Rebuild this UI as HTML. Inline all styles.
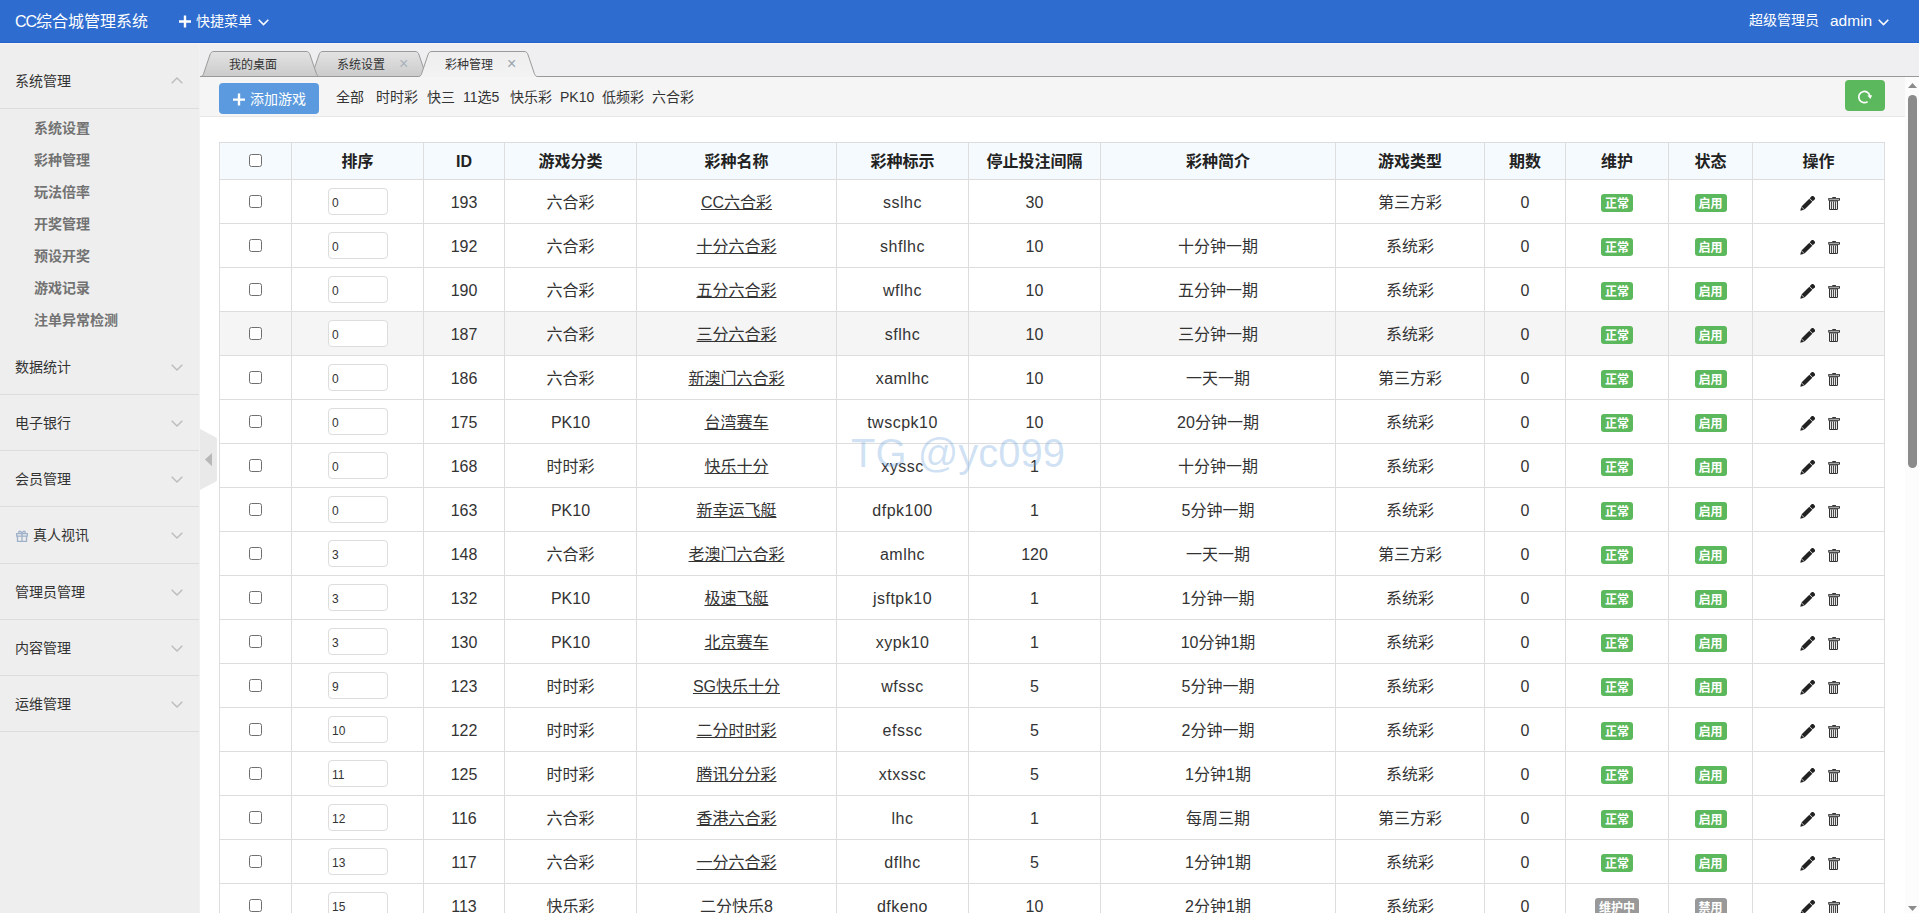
<!DOCTYPE html>
<html lang="zh-CN">
<head>
<meta charset="utf-8">
<title>CC综合城管理系统</title>
<style>
*{box-sizing:border-box;}
html,body{margin:0;padding:0;}
body{width:1919px;height:913px;overflow:hidden;position:relative;background:#fff;
  font-family:"Liberation Sans","Noto Sans CJK SC",sans-serif;color:#333;font-size:14px;}
a{color:inherit;}
/* header */
#hd{position:absolute;left:0;top:0;width:1919px;height:43px;background:#2e6ccf;color:#fff;border-bottom:1px solid #2262cc;}
#hl{position:absolute;left:0;top:43px;width:1919px;height:1px;background:#f9f6f3;z-index:5;}
#hd .t{position:absolute;white-space:nowrap;line-height:20px;}
#logo{left:15px;top:12px;font-size:16px;}
#quick{left:196px;top:11px;font-size:14px;}
#role{left:1749px;top:10px;font-size:14px;}
#adm{left:1830px;top:11px;font-size:15.5px;}
#hd svg{position:absolute;}
/* sidebar */
#sb{position:absolute;left:0;top:43px;width:200px;height:870px;background:#eee;border-right:1px solid #f1f1f1;}
#sb .m{position:absolute;left:0;width:199px;height:56px;border-bottom:1px solid #dcdcdc;}
#sb .m span{position:absolute;left:15px;top:18px;line-height:20px;font-size:14px;color:#333;white-space:nowrap;}
#sb .m svg{position:absolute;left:171px;top:24.5px;}
#sb .s{position:absolute;left:34px;line-height:20px;font-size:14px;color:#727272;font-weight:700;white-space:nowrap;}
/* handle */
#hdl{position:absolute;left:200px;top:429px;}
/* tabs */
#tabs{position:absolute;left:200px;top:43px;width:1719px;height:34px;background:#efeef0;}
#tabs svg{position:absolute;left:0;top:0;}
#tabs .tt{position:absolute;top:15px;line-height:14px;font-size:12px;color:#333;white-space:nowrap;}
#tabs .x{position:absolute;top:14px;line-height:14px;font-size:16px;color:#a9b3bd;}
/* content */
#ct{position:absolute;left:200px;top:77px;width:1705px;height:836px;background:#fff;overflow:hidden;}
#tb{position:absolute;left:0;top:0;width:1705px;height:40px;background:#f5f5f5;border-bottom:1px solid #e7e7e7;}
#add{position:absolute;left:19px;top:6px;width:100px;height:31px;border-radius:4px;background:#5b9ade;color:#fff;font-size:14px;}
#add span{position:absolute;left:31px;top:6px;line-height:20px;white-space:nowrap;}
#add svg{position:absolute;left:14px;top:10px;}
#tb .f{position:absolute;top:10px;line-height:20px;font-size:14px;color:#333;white-space:nowrap;}
#rf{position:absolute;left:1645px;top:3px;width:40px;height:31px;border-radius:4px;background:#5cb85c;}
#rf svg{position:absolute;left:12px;top:9px;}
/* table */
table{position:absolute;left:19px;top:65px;width:1665px;border-collapse:collapse;table-layout:fixed;}
th,td{border:1px solid #ddd;text-align:center;padding:0;font-size:16px;white-space:nowrap;overflow:hidden;}
th{height:37px;background:#f5fafe;font-weight:bold;color:#222;line-height:34px;padding-top:2px;}
td{height:44px;line-height:41px;color:#333;padding-top:2px;}
tr.hov td{background:#f5f5f5;}
td a{text-decoration:underline;}
td:nth-child(6){letter-spacing:.5px;}
.cb{display:inline-block;width:13px;height:13px;border:1px solid #6f6f6f;border-radius:2.5px;background:#fff;vertical-align:top;margin-top:13px;}
th .cb{margin-top:9px;}
.inp{display:inline-block;width:60px;height:27px;border:1px solid #ddd;border-radius:4px;background:#fff;vertical-align:top;margin-top:6px;
  text-align:left;padding-left:3px;font-size:12px;line-height:29px;color:#333;margin-left:1px;}
.lb{display:inline-block;width:32px;height:18px;border-radius:3px;color:#fff;font-size:12px;font-weight:bold;line-height:20px;vertical-align:top;margin-top:12px;text-align:center;}
.lb.ok{background:#5cb85c;}
.lb.off{background:#999;}
.lb.w3{width:44px;}
.ops{display:inline-block;position:relative;width:41px;height:16px;vertical-align:top;margin-top:14px;}
.ic{position:absolute;}
.pen{left:2.4px;top:0;}
.tr{left:29px;top:1px;}
/* scrollbar */
#sc{position:absolute;left:1905px;top:77px;width:14px;height:836px;background:#fcfcfc;}
#sc i{position:absolute;left:3px;top:18px;width:9px;height:373px;border-radius:5px;background:#8b8b8b;}
#sc svg{position:absolute;left:3px;}
/* watermark */
#wm{position:absolute;left:851px;top:430px;font-family:"Liberation Sans",sans-serif;font-size:40px;line-height:46px;color:rgba(105,160,220,0.31);white-space:nowrap;pointer-events:none;}
</style>
</head>
<body>

<div id="hd">
  <div class="t" id="logo"><span style="letter-spacing:-1px">CC</span>综合城管理系统</div>
  <svg style="left:179px;top:15px" width="12" height="13" viewBox="0 0 12 13"><path d="M4.8 0.5h2.4v4.8h4.8v2.4H7.2v4.8H4.8V7.7H0V5.3h4.8z" fill="#fff"/></svg>
  <div class="t" id="quick">快捷菜单</div>
  <svg style="left:258px;top:19px" width="11" height="7" viewBox="0 0 11 7"><path d="M0.7 0.8 L5.5 5.6 L10.3 0.8" fill="none" stroke="#fff" stroke-width="1.5"/></svg>
  <div class="t" id="role">超级管理员</div>
  <div class="t" id="adm">admin</div>
  <svg style="left:1878px;top:19px" width="11" height="7" viewBox="0 0 11 7"><path d="M0.7 0.8 L5.5 5.6 L10.3 0.8" fill="none" stroke="#fff" stroke-width="1.5"/></svg>
</div>

<div id="hl"></div>

<div id="sb">
  <div class="m" style="top:10px"><span>系统管理</span><svg style="top:23.5px" width="12" height="7" viewBox="0 0 12 7"><path d="M0.7 6.3 L6 1 L11.3 6.3" fill="none" stroke="#bcbcbc" stroke-width="1.4"/></svg></div>
  <div class="s" style="top:75px">系统设置</div>
  <div class="s" style="top:107px">彩种管理</div>
  <div class="s" style="top:139px">玩法倍率</div>
  <div class="s" style="top:171px">开奖管理</div>
  <div class="s" style="top:203px">预设开奖</div>
  <div class="s" style="top:235px">游戏记录</div>
  <div class="s" style="top:267px">注单异常检测</div>
  <div class="m" style="top:296px"><span>数据统计</span><svg width="12" height="7" viewBox="0 0 12 7"><path d="M0.7 0.7 L6 6 L11.3 0.7" fill="none" stroke="#bcbcbc" stroke-width="1.4"/></svg></div>
  <div class="m" style="top:352px"><span>电子银行</span><svg width="12" height="7" viewBox="0 0 12 7"><path d="M0.7 0.7 L6 6 L11.3 0.7" fill="none" stroke="#bcbcbc" stroke-width="1.4"/></svg></div>
  <div class="m" style="top:408px"><span>会员管理</span><svg width="12" height="7" viewBox="0 0 12 7"><path d="M0.7 0.7 L6 6 L11.3 0.7" fill="none" stroke="#bcbcbc" stroke-width="1.4"/></svg></div>
  <div class="m" style="top:464px;height:57px"><span style="left:33px">真人视讯</span>
    <svg style="left:16px;top:23px" width="12" height="12" viewBox="0 0 12 12"><path d="M0.7 3.7h10.6v2.4H0.7zM1.5 6.1h9V11.3H1.5zM6 3.7V11.3M3.4 3.5c-1.6-1.4.2-3.2 1.5-1.8L6 3.5 7.1 1.7c1.3-1.4 3.1.4 1.5 1.8" fill="none" stroke="#9fb0c9" stroke-width="1.3"/></svg>
    <svg width="12" height="7" viewBox="0 0 12 7"><path d="M0.7 0.7 L6 6 L11.3 0.7" fill="none" stroke="#bcbcbc" stroke-width="1.4"/></svg></div>
  <div class="m" style="top:521px"><span>管理员管理</span><svg width="12" height="7" viewBox="0 0 12 7"><path d="M0.7 0.7 L6 6 L11.3 0.7" fill="none" stroke="#bcbcbc" stroke-width="1.4"/></svg></div>
  <div class="m" style="top:577px"><span>内容管理</span><svg width="12" height="7" viewBox="0 0 12 7"><path d="M0.7 0.7 L6 6 L11.3 0.7" fill="none" stroke="#bcbcbc" stroke-width="1.4"/></svg></div>
  <div class="m" style="top:633px"><span>运维管理</span><svg width="12" height="7" viewBox="0 0 12 7"><path d="M0.7 0.7 L6 6 L11.3 0.7" fill="none" stroke="#bcbcbc" stroke-width="1.4"/></svg></div>
</div>

<div id="tabs">
  <svg width="1719" height="34" viewBox="0 0 1719 34">
    <defs>
      <linearGradient id="tg" x1="0" y1="0" x2="0" y2="1"><stop offset="0" stop-color="#e3e3e3"/><stop offset="1" stop-color="#cbcbcb"/></linearGradient>
      <linearGradient id="ta" x1="0" y1="0" x2="0" y2="1"><stop offset="0" stop-color="#eeeeee"/><stop offset="1" stop-color="#f3f3f3"/></linearGradient>
    </defs>
    <path d="M109.5 33.5 C111.2 33.5 112 32.4 112.7 30.4 L118.9 12 C119.7 9.6 120.6 8.5 123 8.5 L215 8.5 C217.4 8.5 218.3 9.6 219.1 12 L225.3 30.4 C226 32.4 226.8 33.5 228.5 33.5 Z" fill="url(#tg)" stroke="#9a9a9a" stroke-width="1"/>
    <path d="M0.5 33.5 C2.2 33.5 3 32.4 3.7 30.4 L9.9 12 C10.7 9.6 11.6 8.5 14 8.5 L106 8.5 C108.4 8.5 109.3 9.6 110.1 12 L116.3 30.4 C117 32.4 117.8 33.5 119.5 33.5 Z" fill="url(#tg)" stroke="#9a9a9a" stroke-width="1"/>
    <path d="M0 33.5 H1719" stroke="#999" stroke-width="1" fill="none"/>
    <path d="M218.5 33.5 C220.2 33.5 221 32.4 221.7 30.4 L227.9 12 C228.7 9.6 229.6 8.5 232 8.5 L324 8.5 C326.4 8.5 327.3 9.6 328.1 12 L334.3 30.4 C335 32.4 335.8 33.5 337.5 33.5 L337.5 34.5 L218.5 34.5 Z" fill="url(#ta)" stroke="none"/>
    <path d="M218.5 33.5 C220.2 33.5 221 32.4 221.7 30.4 L227.9 12 C228.7 9.6 229.6 8.5 232 8.5 L324 8.5 C326.4 8.5 327.3 9.6 328.1 12 L334.3 30.4 C335 32.4 335.8 33.5 337.5 33.5" fill="none" stroke="#9a9a9a" stroke-width="1"/>
  </svg>
  <div class="tt" style="left:29px">我的桌面</div>
  <div class="tt" style="left:137px">系统设置</div>
  <div class="x" style="left:199px">×</div>
  <div class="tt" style="left:245px">彩种管理</div>
  <div class="x" style="left:307px;color:#9aa4ae">×</div>
</div>

<div id="ct">
  <div id="tb">
    <div id="add"><svg width="12" height="13" viewBox="0 0 12 13"><path d="M4.8 0.6h2.4v4.8h4.8v2.4H7.2v4.8H4.8V7.8H0V5.4h4.8z" fill="#fff"/></svg><span>添加游戏</span></div>
    <div class="f" style="left:136px">全部</div>
    <div class="f" style="left:176px">时时彩</div>
    <div class="f" style="left:227px">快三</div>
    <div class="f" style="left:263px">11选5</div>
    <div class="f" style="left:310px">快乐彩</div>
    <div class="f" style="left:360px">PK10</div>
    <div class="f" style="left:402px">低频彩</div>
    <div class="f" style="left:452px">六合彩</div>
    <div id="rf"><svg width="16" height="16" viewBox="0 0 16 16"><path d="M12.9 7.2 A5.6 5.6 0 1 0 10.6 12.6" fill="none" stroke="#fff" stroke-width="1.6"/><path d="M10.4 6.4 L15.2 6.2 L13.4 9.9 Z" fill="#fff"/></svg></div>
  </div>
  <table>
    <colgroup><col style="width:72px"><col style="width:132px"><col style="width:81px"><col style="width:132px"><col style="width:200px"><col style="width:132px"><col style="width:132px"><col style="width:235px"><col style="width:149px"><col style="width:81px"><col style="width:103px"><col style="width:84px"><col style="width:132px"></colgroup>
    <thead><tr><th><span class="cb"></span></th><th>排序</th><th>ID</th><th>游戏分类</th><th>彩种名称</th><th>彩种标示</th><th>停止投注间隔</th><th>彩种简介</th><th>游戏类型</th><th>期数</th><th>维护</th><th>状态</th><th>操作</th></tr></thead>
    <tbody>
<tr><td><span class="cb"></span></td><td><span class="inp">0</span></td><td>193</td><td>六合彩</td><td><a>CC六合彩</a></td><td>sslhc</td><td>30</td><td></td><td>第三方彩</td><td>0</td><td><span class="lb ok">正常</span></td><td><span class="lb ok">启用</span></td><td class="op"><span class="ops"><svg class="ic pen" viewBox="0 0 15 15" width="15" height="15"><g transform="translate(0.3 14.7) rotate(-45)" fill="#222"><path d="M0 0 L3.3 -2.1 L3.3 2.1 Z"/><path d="M3.8 -2.15 H14.9 V2.15 H3.8 Z"/><path d="M15.4 -2.15 H18.5 Q19.5 -2.15 19.5 -1.15 V1.15 Q19.5 2.15 18.5 2.15 H15.4 Z"/></g></svg><svg class="ic tr" viewBox="0 0 14 13" width="14" height="13"><path d="M5.3 0 h3.6 v1.2 h-3.6z" fill="#333"/><rect x="1.2" y="0.9" width="11.8" height="2.8" rx="0.7" fill="#333"/><rect x="2.2" y="1.8" width="9.8" height="0.9" fill="#d8d8d8"/><path d="M2 3.5 h9 v8.2 q0 1.3 -1.3 1.3 h-6.4 q-1.3 0 -1.3 -1.3z" fill="#333"/><rect x="3" y="4.4" width="7" height="7.6" fill="#e6e6e6"/><path d="M4 4.4h1v7.6h-1zM6 4.4h1v7.6h-1zM8 4.4h1v7.6h-1z" fill="#4a4a4a"/></svg></span></td></tr>
<tr><td><span class="cb"></span></td><td><span class="inp">0</span></td><td>192</td><td>六合彩</td><td><a>十分六合彩</a></td><td>shflhc</td><td>10</td><td>十分钟一期</td><td>系统彩</td><td>0</td><td><span class="lb ok">正常</span></td><td><span class="lb ok">启用</span></td><td class="op"><span class="ops"><svg class="ic pen" viewBox="0 0 15 15" width="15" height="15"><g transform="translate(0.3 14.7) rotate(-45)" fill="#222"><path d="M0 0 L3.3 -2.1 L3.3 2.1 Z"/><path d="M3.8 -2.15 H14.9 V2.15 H3.8 Z"/><path d="M15.4 -2.15 H18.5 Q19.5 -2.15 19.5 -1.15 V1.15 Q19.5 2.15 18.5 2.15 H15.4 Z"/></g></svg><svg class="ic tr" viewBox="0 0 14 13" width="14" height="13"><path d="M5.3 0 h3.6 v1.2 h-3.6z" fill="#333"/><rect x="1.2" y="0.9" width="11.8" height="2.8" rx="0.7" fill="#333"/><rect x="2.2" y="1.8" width="9.8" height="0.9" fill="#d8d8d8"/><path d="M2 3.5 h9 v8.2 q0 1.3 -1.3 1.3 h-6.4 q-1.3 0 -1.3 -1.3z" fill="#333"/><rect x="3" y="4.4" width="7" height="7.6" fill="#e6e6e6"/><path d="M4 4.4h1v7.6h-1zM6 4.4h1v7.6h-1zM8 4.4h1v7.6h-1z" fill="#4a4a4a"/></svg></span></td></tr>
<tr><td><span class="cb"></span></td><td><span class="inp">0</span></td><td>190</td><td>六合彩</td><td><a>五分六合彩</a></td><td>wflhc</td><td>10</td><td>五分钟一期</td><td>系统彩</td><td>0</td><td><span class="lb ok">正常</span></td><td><span class="lb ok">启用</span></td><td class="op"><span class="ops"><svg class="ic pen" viewBox="0 0 15 15" width="15" height="15"><g transform="translate(0.3 14.7) rotate(-45)" fill="#222"><path d="M0 0 L3.3 -2.1 L3.3 2.1 Z"/><path d="M3.8 -2.15 H14.9 V2.15 H3.8 Z"/><path d="M15.4 -2.15 H18.5 Q19.5 -2.15 19.5 -1.15 V1.15 Q19.5 2.15 18.5 2.15 H15.4 Z"/></g></svg><svg class="ic tr" viewBox="0 0 14 13" width="14" height="13"><path d="M5.3 0 h3.6 v1.2 h-3.6z" fill="#333"/><rect x="1.2" y="0.9" width="11.8" height="2.8" rx="0.7" fill="#333"/><rect x="2.2" y="1.8" width="9.8" height="0.9" fill="#d8d8d8"/><path d="M2 3.5 h9 v8.2 q0 1.3 -1.3 1.3 h-6.4 q-1.3 0 -1.3 -1.3z" fill="#333"/><rect x="3" y="4.4" width="7" height="7.6" fill="#e6e6e6"/><path d="M4 4.4h1v7.6h-1zM6 4.4h1v7.6h-1zM8 4.4h1v7.6h-1z" fill="#4a4a4a"/></svg></span></td></tr>
<tr class="hov"><td><span class="cb"></span></td><td><span class="inp">0</span></td><td>187</td><td>六合彩</td><td><a>三分六合彩</a></td><td>sflhc</td><td>10</td><td>三分钟一期</td><td>系统彩</td><td>0</td><td><span class="lb ok">正常</span></td><td><span class="lb ok">启用</span></td><td class="op"><span class="ops"><svg class="ic pen" viewBox="0 0 15 15" width="15" height="15"><g transform="translate(0.3 14.7) rotate(-45)" fill="#222"><path d="M0 0 L3.3 -2.1 L3.3 2.1 Z"/><path d="M3.8 -2.15 H14.9 V2.15 H3.8 Z"/><path d="M15.4 -2.15 H18.5 Q19.5 -2.15 19.5 -1.15 V1.15 Q19.5 2.15 18.5 2.15 H15.4 Z"/></g></svg><svg class="ic tr" viewBox="0 0 14 13" width="14" height="13"><path d="M5.3 0 h3.6 v1.2 h-3.6z" fill="#333"/><rect x="1.2" y="0.9" width="11.8" height="2.8" rx="0.7" fill="#333"/><rect x="2.2" y="1.8" width="9.8" height="0.9" fill="#d8d8d8"/><path d="M2 3.5 h9 v8.2 q0 1.3 -1.3 1.3 h-6.4 q-1.3 0 -1.3 -1.3z" fill="#333"/><rect x="3" y="4.4" width="7" height="7.6" fill="#e6e6e6"/><path d="M4 4.4h1v7.6h-1zM6 4.4h1v7.6h-1zM8 4.4h1v7.6h-1z" fill="#4a4a4a"/></svg></span></td></tr>
<tr><td><span class="cb"></span></td><td><span class="inp">0</span></td><td>186</td><td>六合彩</td><td><a>新澳门六合彩</a></td><td>xamlhc</td><td>10</td><td>一天一期</td><td>第三方彩</td><td>0</td><td><span class="lb ok">正常</span></td><td><span class="lb ok">启用</span></td><td class="op"><span class="ops"><svg class="ic pen" viewBox="0 0 15 15" width="15" height="15"><g transform="translate(0.3 14.7) rotate(-45)" fill="#222"><path d="M0 0 L3.3 -2.1 L3.3 2.1 Z"/><path d="M3.8 -2.15 H14.9 V2.15 H3.8 Z"/><path d="M15.4 -2.15 H18.5 Q19.5 -2.15 19.5 -1.15 V1.15 Q19.5 2.15 18.5 2.15 H15.4 Z"/></g></svg><svg class="ic tr" viewBox="0 0 14 13" width="14" height="13"><path d="M5.3 0 h3.6 v1.2 h-3.6z" fill="#333"/><rect x="1.2" y="0.9" width="11.8" height="2.8" rx="0.7" fill="#333"/><rect x="2.2" y="1.8" width="9.8" height="0.9" fill="#d8d8d8"/><path d="M2 3.5 h9 v8.2 q0 1.3 -1.3 1.3 h-6.4 q-1.3 0 -1.3 -1.3z" fill="#333"/><rect x="3" y="4.4" width="7" height="7.6" fill="#e6e6e6"/><path d="M4 4.4h1v7.6h-1zM6 4.4h1v7.6h-1zM8 4.4h1v7.6h-1z" fill="#4a4a4a"/></svg></span></td></tr>
<tr><td><span class="cb"></span></td><td><span class="inp">0</span></td><td>175</td><td>PK10</td><td><a>台湾赛车</a></td><td>twscpk10</td><td>10</td><td>20分钟一期</td><td>系统彩</td><td>0</td><td><span class="lb ok">正常</span></td><td><span class="lb ok">启用</span></td><td class="op"><span class="ops"><svg class="ic pen" viewBox="0 0 15 15" width="15" height="15"><g transform="translate(0.3 14.7) rotate(-45)" fill="#222"><path d="M0 0 L3.3 -2.1 L3.3 2.1 Z"/><path d="M3.8 -2.15 H14.9 V2.15 H3.8 Z"/><path d="M15.4 -2.15 H18.5 Q19.5 -2.15 19.5 -1.15 V1.15 Q19.5 2.15 18.5 2.15 H15.4 Z"/></g></svg><svg class="ic tr" viewBox="0 0 14 13" width="14" height="13"><path d="M5.3 0 h3.6 v1.2 h-3.6z" fill="#333"/><rect x="1.2" y="0.9" width="11.8" height="2.8" rx="0.7" fill="#333"/><rect x="2.2" y="1.8" width="9.8" height="0.9" fill="#d8d8d8"/><path d="M2 3.5 h9 v8.2 q0 1.3 -1.3 1.3 h-6.4 q-1.3 0 -1.3 -1.3z" fill="#333"/><rect x="3" y="4.4" width="7" height="7.6" fill="#e6e6e6"/><path d="M4 4.4h1v7.6h-1zM6 4.4h1v7.6h-1zM8 4.4h1v7.6h-1z" fill="#4a4a4a"/></svg></span></td></tr>
<tr><td><span class="cb"></span></td><td><span class="inp">0</span></td><td>168</td><td>时时彩</td><td><a>快乐十分</a></td><td>xyssc</td><td>1</td><td>十分钟一期</td><td>系统彩</td><td>0</td><td><span class="lb ok">正常</span></td><td><span class="lb ok">启用</span></td><td class="op"><span class="ops"><svg class="ic pen" viewBox="0 0 15 15" width="15" height="15"><g transform="translate(0.3 14.7) rotate(-45)" fill="#222"><path d="M0 0 L3.3 -2.1 L3.3 2.1 Z"/><path d="M3.8 -2.15 H14.9 V2.15 H3.8 Z"/><path d="M15.4 -2.15 H18.5 Q19.5 -2.15 19.5 -1.15 V1.15 Q19.5 2.15 18.5 2.15 H15.4 Z"/></g></svg><svg class="ic tr" viewBox="0 0 14 13" width="14" height="13"><path d="M5.3 0 h3.6 v1.2 h-3.6z" fill="#333"/><rect x="1.2" y="0.9" width="11.8" height="2.8" rx="0.7" fill="#333"/><rect x="2.2" y="1.8" width="9.8" height="0.9" fill="#d8d8d8"/><path d="M2 3.5 h9 v8.2 q0 1.3 -1.3 1.3 h-6.4 q-1.3 0 -1.3 -1.3z" fill="#333"/><rect x="3" y="4.4" width="7" height="7.6" fill="#e6e6e6"/><path d="M4 4.4h1v7.6h-1zM6 4.4h1v7.6h-1zM8 4.4h1v7.6h-1z" fill="#4a4a4a"/></svg></span></td></tr>
<tr><td><span class="cb"></span></td><td><span class="inp">0</span></td><td>163</td><td>PK10</td><td><a>新幸运飞艇</a></td><td>dfpk100</td><td>1</td><td>5分钟一期</td><td>系统彩</td><td>0</td><td><span class="lb ok">正常</span></td><td><span class="lb ok">启用</span></td><td class="op"><span class="ops"><svg class="ic pen" viewBox="0 0 15 15" width="15" height="15"><g transform="translate(0.3 14.7) rotate(-45)" fill="#222"><path d="M0 0 L3.3 -2.1 L3.3 2.1 Z"/><path d="M3.8 -2.15 H14.9 V2.15 H3.8 Z"/><path d="M15.4 -2.15 H18.5 Q19.5 -2.15 19.5 -1.15 V1.15 Q19.5 2.15 18.5 2.15 H15.4 Z"/></g></svg><svg class="ic tr" viewBox="0 0 14 13" width="14" height="13"><path d="M5.3 0 h3.6 v1.2 h-3.6z" fill="#333"/><rect x="1.2" y="0.9" width="11.8" height="2.8" rx="0.7" fill="#333"/><rect x="2.2" y="1.8" width="9.8" height="0.9" fill="#d8d8d8"/><path d="M2 3.5 h9 v8.2 q0 1.3 -1.3 1.3 h-6.4 q-1.3 0 -1.3 -1.3z" fill="#333"/><rect x="3" y="4.4" width="7" height="7.6" fill="#e6e6e6"/><path d="M4 4.4h1v7.6h-1zM6 4.4h1v7.6h-1zM8 4.4h1v7.6h-1z" fill="#4a4a4a"/></svg></span></td></tr>
<tr><td><span class="cb"></span></td><td><span class="inp">3</span></td><td>148</td><td>六合彩</td><td><a>老澳门六合彩</a></td><td>amlhc</td><td>120</td><td>一天一期</td><td>第三方彩</td><td>0</td><td><span class="lb ok">正常</span></td><td><span class="lb ok">启用</span></td><td class="op"><span class="ops"><svg class="ic pen" viewBox="0 0 15 15" width="15" height="15"><g transform="translate(0.3 14.7) rotate(-45)" fill="#222"><path d="M0 0 L3.3 -2.1 L3.3 2.1 Z"/><path d="M3.8 -2.15 H14.9 V2.15 H3.8 Z"/><path d="M15.4 -2.15 H18.5 Q19.5 -2.15 19.5 -1.15 V1.15 Q19.5 2.15 18.5 2.15 H15.4 Z"/></g></svg><svg class="ic tr" viewBox="0 0 14 13" width="14" height="13"><path d="M5.3 0 h3.6 v1.2 h-3.6z" fill="#333"/><rect x="1.2" y="0.9" width="11.8" height="2.8" rx="0.7" fill="#333"/><rect x="2.2" y="1.8" width="9.8" height="0.9" fill="#d8d8d8"/><path d="M2 3.5 h9 v8.2 q0 1.3 -1.3 1.3 h-6.4 q-1.3 0 -1.3 -1.3z" fill="#333"/><rect x="3" y="4.4" width="7" height="7.6" fill="#e6e6e6"/><path d="M4 4.4h1v7.6h-1zM6 4.4h1v7.6h-1zM8 4.4h1v7.6h-1z" fill="#4a4a4a"/></svg></span></td></tr>
<tr><td><span class="cb"></span></td><td><span class="inp">3</span></td><td>132</td><td>PK10</td><td><a>极速飞艇</a></td><td>jsftpk10</td><td>1</td><td>1分钟一期</td><td>系统彩</td><td>0</td><td><span class="lb ok">正常</span></td><td><span class="lb ok">启用</span></td><td class="op"><span class="ops"><svg class="ic pen" viewBox="0 0 15 15" width="15" height="15"><g transform="translate(0.3 14.7) rotate(-45)" fill="#222"><path d="M0 0 L3.3 -2.1 L3.3 2.1 Z"/><path d="M3.8 -2.15 H14.9 V2.15 H3.8 Z"/><path d="M15.4 -2.15 H18.5 Q19.5 -2.15 19.5 -1.15 V1.15 Q19.5 2.15 18.5 2.15 H15.4 Z"/></g></svg><svg class="ic tr" viewBox="0 0 14 13" width="14" height="13"><path d="M5.3 0 h3.6 v1.2 h-3.6z" fill="#333"/><rect x="1.2" y="0.9" width="11.8" height="2.8" rx="0.7" fill="#333"/><rect x="2.2" y="1.8" width="9.8" height="0.9" fill="#d8d8d8"/><path d="M2 3.5 h9 v8.2 q0 1.3 -1.3 1.3 h-6.4 q-1.3 0 -1.3 -1.3z" fill="#333"/><rect x="3" y="4.4" width="7" height="7.6" fill="#e6e6e6"/><path d="M4 4.4h1v7.6h-1zM6 4.4h1v7.6h-1zM8 4.4h1v7.6h-1z" fill="#4a4a4a"/></svg></span></td></tr>
<tr><td><span class="cb"></span></td><td><span class="inp">3</span></td><td>130</td><td>PK10</td><td><a>北京赛车</a></td><td>xypk10</td><td>1</td><td>10分钟1期</td><td>系统彩</td><td>0</td><td><span class="lb ok">正常</span></td><td><span class="lb ok">启用</span></td><td class="op"><span class="ops"><svg class="ic pen" viewBox="0 0 15 15" width="15" height="15"><g transform="translate(0.3 14.7) rotate(-45)" fill="#222"><path d="M0 0 L3.3 -2.1 L3.3 2.1 Z"/><path d="M3.8 -2.15 H14.9 V2.15 H3.8 Z"/><path d="M15.4 -2.15 H18.5 Q19.5 -2.15 19.5 -1.15 V1.15 Q19.5 2.15 18.5 2.15 H15.4 Z"/></g></svg><svg class="ic tr" viewBox="0 0 14 13" width="14" height="13"><path d="M5.3 0 h3.6 v1.2 h-3.6z" fill="#333"/><rect x="1.2" y="0.9" width="11.8" height="2.8" rx="0.7" fill="#333"/><rect x="2.2" y="1.8" width="9.8" height="0.9" fill="#d8d8d8"/><path d="M2 3.5 h9 v8.2 q0 1.3 -1.3 1.3 h-6.4 q-1.3 0 -1.3 -1.3z" fill="#333"/><rect x="3" y="4.4" width="7" height="7.6" fill="#e6e6e6"/><path d="M4 4.4h1v7.6h-1zM6 4.4h1v7.6h-1zM8 4.4h1v7.6h-1z" fill="#4a4a4a"/></svg></span></td></tr>
<tr><td><span class="cb"></span></td><td><span class="inp">9</span></td><td>123</td><td>时时彩</td><td><a>SG快乐十分</a></td><td>wfssc</td><td>5</td><td>5分钟一期</td><td>系统彩</td><td>0</td><td><span class="lb ok">正常</span></td><td><span class="lb ok">启用</span></td><td class="op"><span class="ops"><svg class="ic pen" viewBox="0 0 15 15" width="15" height="15"><g transform="translate(0.3 14.7) rotate(-45)" fill="#222"><path d="M0 0 L3.3 -2.1 L3.3 2.1 Z"/><path d="M3.8 -2.15 H14.9 V2.15 H3.8 Z"/><path d="M15.4 -2.15 H18.5 Q19.5 -2.15 19.5 -1.15 V1.15 Q19.5 2.15 18.5 2.15 H15.4 Z"/></g></svg><svg class="ic tr" viewBox="0 0 14 13" width="14" height="13"><path d="M5.3 0 h3.6 v1.2 h-3.6z" fill="#333"/><rect x="1.2" y="0.9" width="11.8" height="2.8" rx="0.7" fill="#333"/><rect x="2.2" y="1.8" width="9.8" height="0.9" fill="#d8d8d8"/><path d="M2 3.5 h9 v8.2 q0 1.3 -1.3 1.3 h-6.4 q-1.3 0 -1.3 -1.3z" fill="#333"/><rect x="3" y="4.4" width="7" height="7.6" fill="#e6e6e6"/><path d="M4 4.4h1v7.6h-1zM6 4.4h1v7.6h-1zM8 4.4h1v7.6h-1z" fill="#4a4a4a"/></svg></span></td></tr>
<tr><td><span class="cb"></span></td><td><span class="inp">10</span></td><td>122</td><td>时时彩</td><td><a>二分时时彩</a></td><td>efssc</td><td>5</td><td>2分钟一期</td><td>系统彩</td><td>0</td><td><span class="lb ok">正常</span></td><td><span class="lb ok">启用</span></td><td class="op"><span class="ops"><svg class="ic pen" viewBox="0 0 15 15" width="15" height="15"><g transform="translate(0.3 14.7) rotate(-45)" fill="#222"><path d="M0 0 L3.3 -2.1 L3.3 2.1 Z"/><path d="M3.8 -2.15 H14.9 V2.15 H3.8 Z"/><path d="M15.4 -2.15 H18.5 Q19.5 -2.15 19.5 -1.15 V1.15 Q19.5 2.15 18.5 2.15 H15.4 Z"/></g></svg><svg class="ic tr" viewBox="0 0 14 13" width="14" height="13"><path d="M5.3 0 h3.6 v1.2 h-3.6z" fill="#333"/><rect x="1.2" y="0.9" width="11.8" height="2.8" rx="0.7" fill="#333"/><rect x="2.2" y="1.8" width="9.8" height="0.9" fill="#d8d8d8"/><path d="M2 3.5 h9 v8.2 q0 1.3 -1.3 1.3 h-6.4 q-1.3 0 -1.3 -1.3z" fill="#333"/><rect x="3" y="4.4" width="7" height="7.6" fill="#e6e6e6"/><path d="M4 4.4h1v7.6h-1zM6 4.4h1v7.6h-1zM8 4.4h1v7.6h-1z" fill="#4a4a4a"/></svg></span></td></tr>
<tr><td><span class="cb"></span></td><td><span class="inp">11</span></td><td>125</td><td>时时彩</td><td><a>腾讯分分彩</a></td><td>xtxssc</td><td>5</td><td>1分钟1期</td><td>系统彩</td><td>0</td><td><span class="lb ok">正常</span></td><td><span class="lb ok">启用</span></td><td class="op"><span class="ops"><svg class="ic pen" viewBox="0 0 15 15" width="15" height="15"><g transform="translate(0.3 14.7) rotate(-45)" fill="#222"><path d="M0 0 L3.3 -2.1 L3.3 2.1 Z"/><path d="M3.8 -2.15 H14.9 V2.15 H3.8 Z"/><path d="M15.4 -2.15 H18.5 Q19.5 -2.15 19.5 -1.15 V1.15 Q19.5 2.15 18.5 2.15 H15.4 Z"/></g></svg><svg class="ic tr" viewBox="0 0 14 13" width="14" height="13"><path d="M5.3 0 h3.6 v1.2 h-3.6z" fill="#333"/><rect x="1.2" y="0.9" width="11.8" height="2.8" rx="0.7" fill="#333"/><rect x="2.2" y="1.8" width="9.8" height="0.9" fill="#d8d8d8"/><path d="M2 3.5 h9 v8.2 q0 1.3 -1.3 1.3 h-6.4 q-1.3 0 -1.3 -1.3z" fill="#333"/><rect x="3" y="4.4" width="7" height="7.6" fill="#e6e6e6"/><path d="M4 4.4h1v7.6h-1zM6 4.4h1v7.6h-1zM8 4.4h1v7.6h-1z" fill="#4a4a4a"/></svg></span></td></tr>
<tr><td><span class="cb"></span></td><td><span class="inp">12</span></td><td>116</td><td>六合彩</td><td><a>香港六合彩</a></td><td>lhc</td><td>1</td><td>每周三期</td><td>第三方彩</td><td>0</td><td><span class="lb ok">正常</span></td><td><span class="lb ok">启用</span></td><td class="op"><span class="ops"><svg class="ic pen" viewBox="0 0 15 15" width="15" height="15"><g transform="translate(0.3 14.7) rotate(-45)" fill="#222"><path d="M0 0 L3.3 -2.1 L3.3 2.1 Z"/><path d="M3.8 -2.15 H14.9 V2.15 H3.8 Z"/><path d="M15.4 -2.15 H18.5 Q19.5 -2.15 19.5 -1.15 V1.15 Q19.5 2.15 18.5 2.15 H15.4 Z"/></g></svg><svg class="ic tr" viewBox="0 0 14 13" width="14" height="13"><path d="M5.3 0 h3.6 v1.2 h-3.6z" fill="#333"/><rect x="1.2" y="0.9" width="11.8" height="2.8" rx="0.7" fill="#333"/><rect x="2.2" y="1.8" width="9.8" height="0.9" fill="#d8d8d8"/><path d="M2 3.5 h9 v8.2 q0 1.3 -1.3 1.3 h-6.4 q-1.3 0 -1.3 -1.3z" fill="#333"/><rect x="3" y="4.4" width="7" height="7.6" fill="#e6e6e6"/><path d="M4 4.4h1v7.6h-1zM6 4.4h1v7.6h-1zM8 4.4h1v7.6h-1z" fill="#4a4a4a"/></svg></span></td></tr>
<tr><td><span class="cb"></span></td><td><span class="inp">13</span></td><td>117</td><td>六合彩</td><td><a>一分六合彩</a></td><td>dflhc</td><td>5</td><td>1分钟1期</td><td>系统彩</td><td>0</td><td><span class="lb ok">正常</span></td><td><span class="lb ok">启用</span></td><td class="op"><span class="ops"><svg class="ic pen" viewBox="0 0 15 15" width="15" height="15"><g transform="translate(0.3 14.7) rotate(-45)" fill="#222"><path d="M0 0 L3.3 -2.1 L3.3 2.1 Z"/><path d="M3.8 -2.15 H14.9 V2.15 H3.8 Z"/><path d="M15.4 -2.15 H18.5 Q19.5 -2.15 19.5 -1.15 V1.15 Q19.5 2.15 18.5 2.15 H15.4 Z"/></g></svg><svg class="ic tr" viewBox="0 0 14 13" width="14" height="13"><path d="M5.3 0 h3.6 v1.2 h-3.6z" fill="#333"/><rect x="1.2" y="0.9" width="11.8" height="2.8" rx="0.7" fill="#333"/><rect x="2.2" y="1.8" width="9.8" height="0.9" fill="#d8d8d8"/><path d="M2 3.5 h9 v8.2 q0 1.3 -1.3 1.3 h-6.4 q-1.3 0 -1.3 -1.3z" fill="#333"/><rect x="3" y="4.4" width="7" height="7.6" fill="#e6e6e6"/><path d="M4 4.4h1v7.6h-1zM6 4.4h1v7.6h-1zM8 4.4h1v7.6h-1z" fill="#4a4a4a"/></svg></span></td></tr>
<tr><td><span class="cb"></span></td><td><span class="inp">15</span></td><td>113</td><td>快乐彩</td><td><a>二分快乐8</a></td><td>dfkeno</td><td>10</td><td>2分钟1期</td><td>系统彩</td><td>0</td><td><span class="lb off w3">维护中</span></td><td><span class="lb off">禁用</span></td><td class="op"><span class="ops"><svg class="ic pen" viewBox="0 0 15 15" width="15" height="15"><g transform="translate(0.3 14.7) rotate(-45)" fill="#222"><path d="M0 0 L3.3 -2.1 L3.3 2.1 Z"/><path d="M3.8 -2.15 H14.9 V2.15 H3.8 Z"/><path d="M15.4 -2.15 H18.5 Q19.5 -2.15 19.5 -1.15 V1.15 Q19.5 2.15 18.5 2.15 H15.4 Z"/></g></svg><svg class="ic tr" viewBox="0 0 14 13" width="14" height="13"><path d="M5.3 0 h3.6 v1.2 h-3.6z" fill="#333"/><rect x="1.2" y="0.9" width="11.8" height="2.8" rx="0.7" fill="#333"/><rect x="2.2" y="1.8" width="9.8" height="0.9" fill="#d8d8d8"/><path d="M2 3.5 h9 v8.2 q0 1.3 -1.3 1.3 h-6.4 q-1.3 0 -1.3 -1.3z" fill="#333"/><rect x="3" y="4.4" width="7" height="7.6" fill="#e6e6e6"/><path d="M4 4.4h1v7.6h-1zM6 4.4h1v7.6h-1zM8 4.4h1v7.6h-1z" fill="#4a4a4a"/></svg></span></td></tr>
    </tbody>
  </table>
</div>

<svg id="hdl" width="18" height="62" viewBox="0 0 18 62"><path d="M0 0 L15.6 8.2 Q17 9 17 10.6 L17 50.4 Q17 52 15.6 52.8 L0 61 Z" fill="#e9e9e9"/><path d="M12 24 L12 37.2 L5 30.6 Z" fill="#b8b8b8"/></svg>

<div id="sc">
  <svg style="top:6px" width="9" height="5" viewBox="0 0 9 5"><path d="M0 5 L4.5 0 L9 5 Z" fill="#8b8b8b"/></svg>
  <i></i>
  <svg style="top:829px" width="9" height="5" viewBox="0 0 9 5"><path d="M0 0 L4.5 5 L9 0 Z" fill="#8b8b8b"/></svg>
</div>

<div id="wm">TG @yc099</div>

</body>
</html>
